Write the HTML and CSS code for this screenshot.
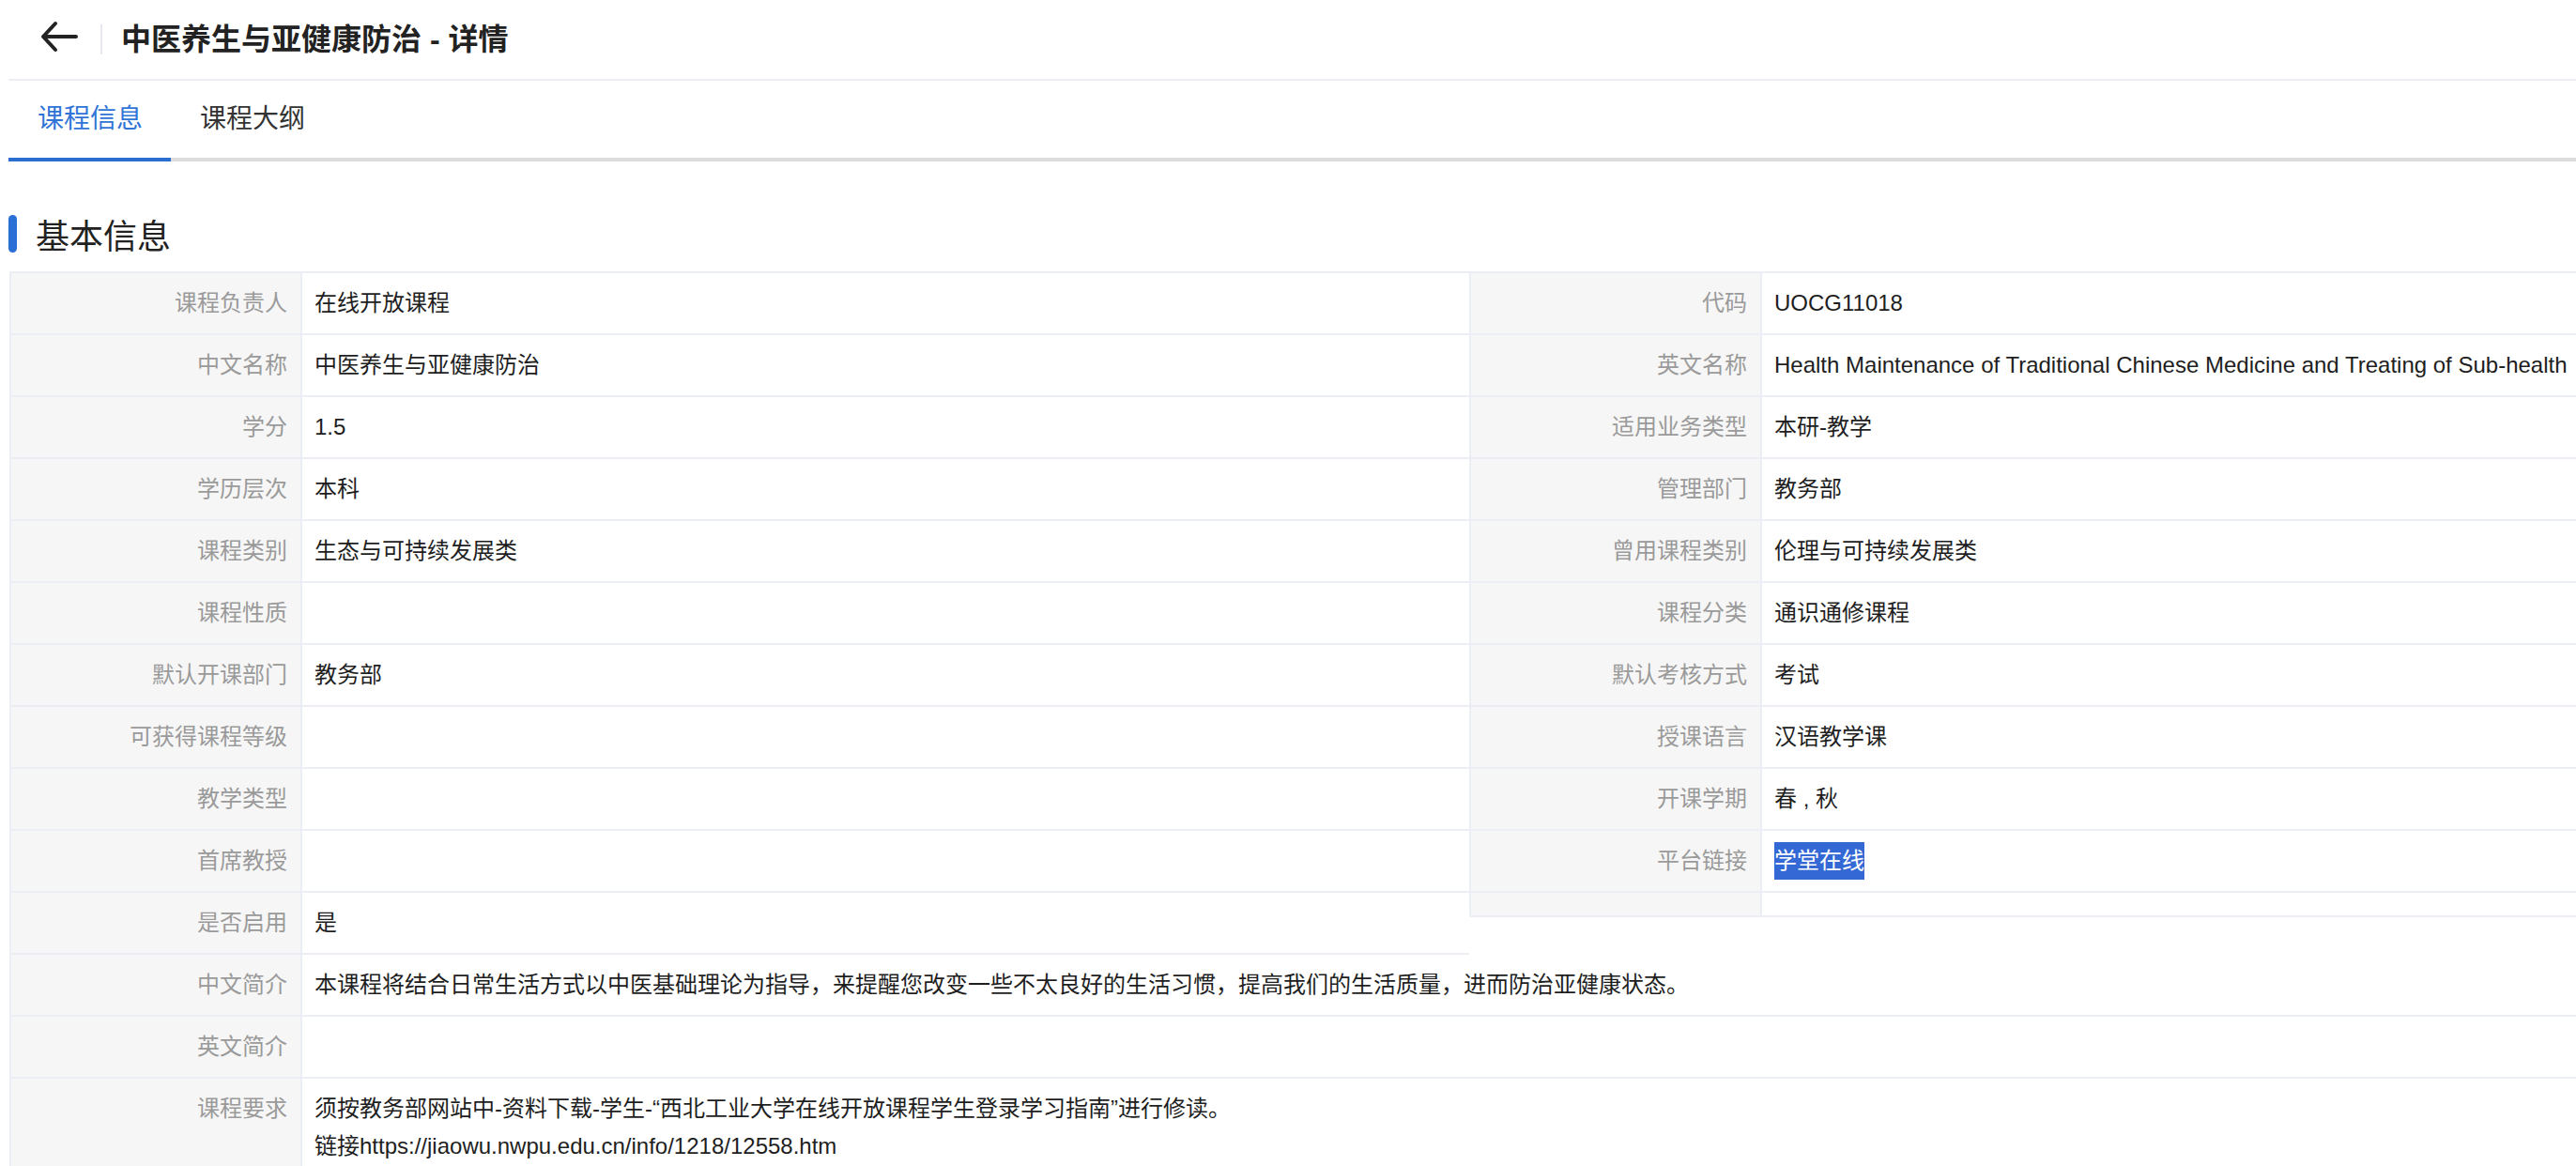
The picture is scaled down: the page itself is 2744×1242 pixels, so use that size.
FILE: index.html
```html
<!DOCTYPE html>
<html lang="zh-CN">
<head>
<meta charset="utf-8">
<title>中医养生与亚健康防治 - 详情</title>
<link rel="stylesheet" href="styles.css">
</head>
<body>
<div class="page">
  <header class="header">
    <button class="back" aria-label="返回">
      <svg width="40" height="34" viewBox="0 0 40 34"><path d="M3 17 H38 M16 3 L3 17 L16 31" fill="none" stroke="#222" stroke-width="4" stroke-linecap="round" stroke-linejoin="round"/></svg>
    </button>
    <span class="divider"></span>
    <h1 class="title">中医养生与亚健康防治 - 详情</h1>
  </header>
  <nav class="tabs">
    <a class="tab active">课程信息</a>
    <a class="tab">课程大纲</a>
  </nav>
  <h2 class="section-title"><span class="bar"></span>基本信息</h2>
  <div class="info">
    <div class="cols">
      <div class="col col-left">
        <div class="row"><div class="label">课程负责人</div><div class="value">在线开放课程</div></div>
        <div class="row"><div class="label">中文名称</div><div class="value">中医养生与亚健康防治</div></div>
        <div class="row"><div class="label">学分</div><div class="value">1.5</div></div>
        <div class="row"><div class="label">学历层次</div><div class="value">本科</div></div>
        <div class="row"><div class="label">课程类别</div><div class="value">生态与可持续发展类</div></div>
        <div class="row"><div class="label">课程性质</div><div class="value"></div></div>
        <div class="row"><div class="label">默认开课部门</div><div class="value">教务部</div></div>
        <div class="row"><div class="label">可获得课程等级</div><div class="value"></div></div>
        <div class="row"><div class="label">教学类型</div><div class="value"></div></div>
        <div class="row"><div class="label">首席教授</div><div class="value"></div></div>
        <div class="row"><div class="label">是否启用</div><div class="value">是</div></div>
      </div>
      <div class="col col-right">
        <div class="row"><div class="label">代码</div><div class="value">UOCG11018</div></div>
        <div class="row"><div class="label">英文名称</div><div class="value">Health Maintenance of Traditional Chinese Medicine and Treating of Sub-health</div></div>
        <div class="row"><div class="label">适用业务类型</div><div class="value">本研-教学</div></div>
        <div class="row"><div class="label">管理部门</div><div class="value">教务部</div></div>
        <div class="row"><div class="label">曾用课程类别</div><div class="value">伦理与可持续发展类</div></div>
        <div class="row"><div class="label">课程分类</div><div class="value">通识通修课程</div></div>
        <div class="row"><div class="label">默认考核方式</div><div class="value">考试</div></div>
        <div class="row"><div class="label">授课语言</div><div class="value">汉语教学课</div></div>
        <div class="row"><div class="label">开课学期</div><div class="value">春 , 秋</div></div>
        <div class="row"><div class="label">平台链接</div><div class="value"><span class="selected">学堂在线</span></div></div>
        <div class="row"><div class="label"></div><div class="value"></div></div>
      </div>
    </div>
    <div class="row"><div class="label">中文简介</div><div class="value">本课程将结合日常生活方式以中医基础理论为指导，来提醒您改变一些不太良好的生活习惯，提高我们的生活质量，进而防治亚健康状态。</div></div>
    <div class="row"><div class="label">英文简介</div><div class="value"></div></div>
    <div class="row"><div class="label">课程要求</div><div class="value">须按教务部网站中-资料下载-学生-“西北工业大学在线开放课程学生登录学习指南”进行修读。<br>链接https://jiaowu.nwpu.edu.cn/info/1218/12558.htm</div></div>
  </div>
</div>
</body>
</html>
```
FILE: styles.css
```css
html, body {
  margin: 0;
  padding: 0;
  overflow: hidden;
  background: #fff;
}
body {
  font-family: "Liberation Sans", "Noto Sans CJK SC", sans-serif;
  color: #222;
}
.page {
  padding-left: 9px;
}
.header {
  height: 84px;
  display: flex;
  align-items: center;
  border-bottom: 2px solid #eceef4;
}
.back {
  border: 0;
  background: none;
  padding: 0;
  margin-left: 34px;
  display: flex;
  align-items: center;
  margin-top: -6px;
}
.divider {
  width: 2px;
  height: 32px;
  background: #e6e8ed;
  margin-left: 24px;
}
.title {
  margin: 0 0 0 20px;
  font-size: 32px;
  font-weight: bold;
  color: #222;
  margin-top: -6px;
}
.tabs {
  display: flex;
  height: 82px;
  border-bottom: 4px solid #dcdcdc;
}
.tab {
  font-size: 28px;
  line-height: 82px;
  padding: 0 30px 0 31px;
  color: #333;
  border-bottom: 4px solid transparent;
  margin-bottom: -4px;
}
.tab.active {
  color: #2f74d6;
  border-bottom-color: #2a6fcf;
}
.section-title {
  display: flex;
  align-items: center;
  margin: 57px 0 20px 0;
  height: 40px;
  font-size: 36px;
  font-weight: normal;
  color: #222;
}
.bar {
  width: 9px;
  height: 40px;
  border-radius: 5px;
  background: #2a6fd6;
  margin-right: 20px;
}
.info {
  margin-left: 1px;
  border-top: 2px solid #ebeef4;
  font-size: 24px;
  line-height: 40px;
}
.cols {
  display: flex;
  align-items: flex-start;
}
.col-left {
  flex: 0 0 1555px;
}
.col-right {
  flex: 1;
  min-width: 0;
}
.row {
  display: flex;
  border-left: 2px solid #ebeef4;
  border-bottom: 2px solid #ebeef4;
}
.label {
  flex: 0 0 310px;
  box-sizing: border-box;
  padding: 12px 14px;
  background: #f6f6f6;
  border-right: 2px solid #ebeef4;
  text-align: right;
  color: #9a9a9a;
}
.value {
  flex: 1;
  min-width: 0;
  padding: 12px 13px;
  color: #1e1e1e;
  white-space: nowrap;
}
.col-right .value {
  padding-right: 0;
}
.selected {
  display: inline-block;
  height: 40px;
  background: #3468d4;
  color: #fff;
}
```
